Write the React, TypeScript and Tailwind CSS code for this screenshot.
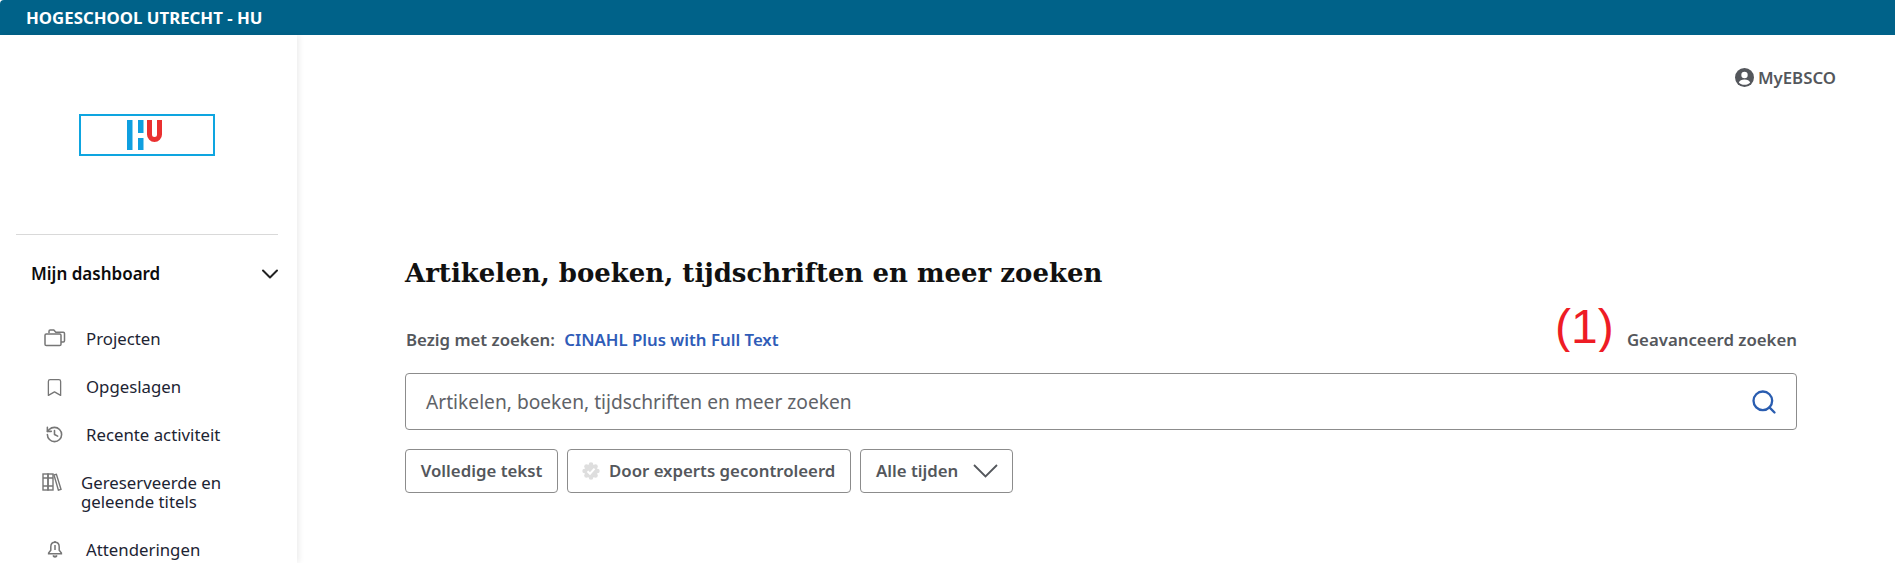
import { Bookmark, ChevronDown, History, Search } from "lucide-react";

function FolderIcon() {
  return (
    <svg width="22" height="18" viewBox="0 0 22 18" fill="none" stroke="#767676" strokeWidth="1.5">
      <path d="M5 4V2.2C5 1.5 5.5 1 6.2 1h3.6l2 2.2h7.500c.7 0 1.200.5 1.200 1.200v7.400c0 .7-.5 1.200-1.200 1.200H17" />
      <rect x="1" y="5" width="16" height="11.5" rx="1.3" />
    </svg>
  );
}

function BooksIcon() {
  return (
    <svg width="20" height="18" viewBox="0 0 20 18" fill="none" stroke="#767676" strokeWidth="1.4">
      <rect x="1" y="1" width="5" height="16" fill="#fff" />
      <rect x="6" y="1" width="5" height="16" />
      <path d="M12 2l2.4-.6L19 16.4l-2.6.8z" />
      <path d="M1 5h10M1 13h10" />
    </svg>
  );
}

function BellIcon() {
  return (
    <svg width="16" height="18" viewBox="0 0 16 18" fill="none" stroke="#767676" strokeWidth="1.5">
      <path d="M8 2.2c-2.7 0-4.2 2-4.2 4.6v3.4L1.6 13v.8h12.8V13l-2.2-2.8V6.800C12.200 4.200 10.700 2.200 8 2.200z" />
      <path d="M8 1v1.200M8 5v5" />
      <path d="M6 15.500c.4 1 1.100 1.500 2 1.500s1.600-.5 2-1.500" fill="#767676" />
    </svg>
  );
}

function VerifiedIcon() {
  const bumps = [
    [9, 2.6],
    [13.5, 4.5],
    [15.4, 9],
    [13.5, 13.5],
    [9, 15.4],
    [4.5, 13.5],
    [2.6, 9],
    [4.5, 4.5],
  ];
  return (
    <svg width="18" height="18" viewBox="0 0 18 18">
      <circle cx="9" cy="9" r="6.6" fill="#dedede" />
      {bumps.map(([cx, cy], i) => (
        <circle key={i} cx={cx} cy={cy} r="2.3" fill="#dedede" />
      ))}
      <path d="M5.500 9.200l2.500 2.500 4.500-5" fill="none" stroke="#fff" strokeWidth="2" />
    </svg>
  );
}

function UserIcon() {
  return (
    <svg width="19" height="19" viewBox="0 0 19 19">
      <circle cx="9.500" cy="9.500" r="9.500" fill="#54575c" />
      <circle cx="9.500" cy="7" r="3.200" fill="#fff" />
      <path d="M3.800 14.500c.8-2 2.800-3 5.700-3s4.900 1 5.700 3c-1.400 1.500-3.400 2.300-5.700 2.300s-4.300-.8-5.700-2.300z" fill="#fff" />
    </svg>
  );
}

function HuLogo() {
  return (
    <div className="flex h-[42px] w-[136px] items-center justify-center border-2 border-[#0ea5e0] pb-[1px] pr-[4px]">
      <svg width="36" height="30" viewBox="0 0 36 30">
        <rect x="0" y="0" width="5.5" height="30" fill="#0f9fe0" />
        <rect x="11" y="0" width="5.5" height="13" fill="#0f9fe0" />
        <rect x="11" y="18" width="5.5" height="12" fill="#0f9fe0" />
        <path d="M22.500 0v14.500a5 5 0 0 0 10 0V0" fill="none" stroke="#ea3030" strokeWidth="5" />
      </svg>
    </div>
  );
}

export default function App() {
  const font = { fontFamily: '"Noto Sans", sans-serif' };

  return (
    <div className="flex h-[563px] w-[1895px] flex-col overflow-hidden bg-white" style={font}>
      <div className="flex h-[35px] shrink-0 items-center rounded-tl-[4px] bg-[#006289] pl-[26px] text-[16.8px] font-bold text-white">
        HOGESCHOOL UTRECHT - HU
      </div>

      <div className="flex min-h-0 flex-1">
        {/* Sidebar */}
        <aside className="w-[297px] shrink-0 pl-[16px] pr-[19px] shadow-[2px_0_6px_rgba(0,0,0,0.08)]">
          <div className="flex h-[200px] items-start justify-center border-b border-[#d9d9d9] pr-[1px] pt-[79px]">
            <HuLogo />
          </div>

          <div className="mt-[25px] mr-[-6px] flex items-center justify-between pl-[15px]">
            <span className="text-[17px] leading-[20px] font-semibold text-[#0c0c0c]">Mijn dashboard</span>
            <ChevronDown size={28} strokeWidth={1.7} className="text-[#222]" />
          </div>

          <ul className="mt-[37px] mr-[-19px] text-[16.8px] leading-[19px] text-[#1d2433]">
            <li className="flex h-[48px] pt-[4px]">
              <span className="flex w-[70px] justify-center pl-[15px] pr-[8px]">
                <FolderIcon />
              </span>
              Projecten
            </li>
            <li className="flex h-[48px] pt-[4px]">
              <span className="flex w-[70px] justify-center pl-[15px] pr-[8px]">
                <Bookmark size={21} strokeWidth={1.5} className="text-[#767676]" />
              </span>
              Opgeslagen
            </li>
            <li className="flex h-[48px] pt-[4px]">
              <span className="flex w-[70px] justify-center pl-[15px] pr-[8px]">
                <History size={19} strokeWidth={2} className="text-[#767676]" />
              </span>
              Recente activiteit
            </li>
            <li className="flex h-[67px] pt-[4px]">
              <span className="flex w-[65px] justify-center pl-[12px] pr-[6px]">
                <BooksIcon />
              </span>
              <span>
                Gereserveerde en
                <br />
                geleende titels
              </span>
            </li>
            <li className="flex pt-[4px]">
              <span className="flex w-[70px] justify-center pl-[15px] pr-[8px]">
                <BellIcon />
              </span>
              Attenderingen
            </li>
          </ul>
        </aside>

        {/* Main */}
        <main className="relative flex-1 pl-[108px] pr-[98px]">
          <div className="flex justify-end pt-[31px]">
            <a className="mr-[-39px] flex items-center gap-[4px] text-[16.8px] leading-[23px] font-semibold text-[#54575c]">
              <UserIcon />
              MyEBSCO
            </a>
          </div>

          <h1
            className="mt-[166px] text-[26px] leading-[36px] font-bold text-[#111]"
            style={{ fontFamily: '"DejaVu Serif", serif' }}
          >
            Artikelen, boeken, tijdschriften en meer zoeken
          </h1>

          <div className="mt-[39px] flex items-center justify-between text-[16.8px] leading-[20px] font-semibold">
            <div className="pl-[1px] text-[#54575c]">
              Bezig met zoeken: <span className="ml-[5px] text-[#2f5cb8]">CINAHL Plus with Full Text</span>
            </div>
            <a className="text-[#54575c]">Geavanceerd zoeken</a>
          </div>

          {/* annotation pasted over the page, clipped top and bottom */}
          <span
            className="absolute top-[273px] left-[1258px] h-[44px] overflow-hidden text-[48px] leading-[38.8px] text-[#ee1c25]"
            style={{ fontFamily: '"Liberation Sans", sans-serif' }}
          >
            (1)
          </span>

          <div className="mt-[23px] flex h-[57px] items-center justify-between rounded-[4px] border border-[#8c8c8c] pl-[20px] pr-[18px]">
            <span className="pt-[2px] text-[19.2px] text-[#5f6368]">Artikelen, boeken, tijdschriften en meer zoeken</span>
            <Search size={28} strokeWidth={2} className="text-[#2a5db0]" />
          </div>

          <div className="mt-[19px] flex gap-[9px] text-[16.8px] font-semibold text-[#54575c]">
            <button className="h-[44px] w-[153px] rounded-[4px] border border-[#8c8c8c]">Volledige tekst</button>
            <button className="flex h-[44px] w-[284px] items-center gap-[9px] rounded-[4px] border border-[#8c8c8c] pl-[14px]">
              <VerifiedIcon />
              Door experts gecontroleerd
            </button>
            <button className="flex h-[44px] w-[153px] items-center gap-[15px] rounded-[4px] border border-[#8c8c8c] pl-[15px]">
              Alle tijden
              <svg width="25" height="14" viewBox="0 0 25 14" fill="none" stroke="#54575c" strokeWidth="1.8">
                <path d="M1 1l11.500 11.500L24 1" />
              </svg>
            </button>
          </div>
        </main>
      </div>
    </div>
  );
}
